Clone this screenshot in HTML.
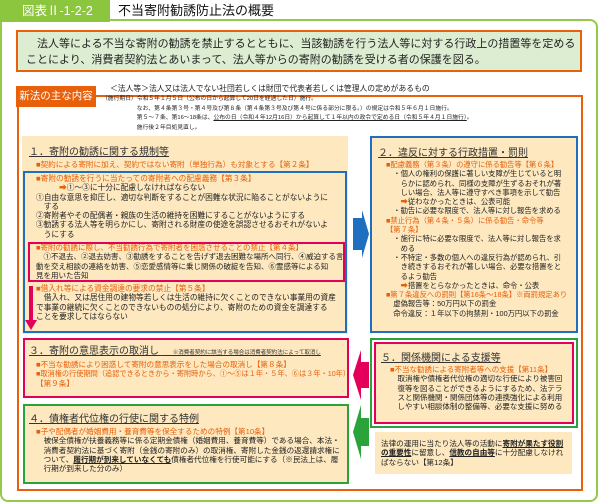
<!DOCTYPE html>
<html><head><meta charset="utf-8"><style>
*{margin:0;padding:0;box-sizing:border-box}
body{width:600px;height:504px;background:#fff;position:relative;overflow:hidden;font-family:"Liberation Sans","Noto Sans CJK JP",sans-serif;color:#222}
.a{position:absolute}
.t{font-size:7.6px;line-height:9.3px;white-space:nowrap}
.o{color:#e8600a}
.h{font-size:10px;line-height:12px;text-decoration:underline;color:#333;white-space:nowrap}
</style></head><body>
<div class="a" style="left:0;top:19px;width:598px;height:483px;border:2px solid #95c94a;border-radius:0 8px 8px 8px"></div>
<div class="a" style="left:0;top:0;width:110px;height:22px;background:#8cc63f;color:#fff;font-size:12.5px;line-height:22px;padding-left:22px">図表Ⅱ-1-2-2</div>
<div class="a" style="left:118px;top:2px;font-size:13px;line-height:18px;color:#111">不当寄附勧誘防止法の概要</div>

<div class="a" style="left:16px;top:30px;width:566px;height:42px;background:#dcedd2;border:2px solid #e8600a;font-size:11px;line-height:16px;padding:4px 0 0 8px;color:#222;white-space:nowrap">　法人等による不当な寄附の勧誘を禁止するとともに、当該勧誘を行う法人等に対する行政上の措置等を定める<br>ことにより、消費者契約法とあいまって、法人等からの寄附の勧誘を受ける者の保護を図る。</div>

<div class="a" style="left:17px;top:95px;width:566px;height:396px;border:2px solid #e8600a"></div>
<div class="a" style="left:16px;top:86px;width:80px;height:21px;background:#e8600a;color:#fff;font-size:10.5px;line-height:21px;text-align:center">新法の主な内容</div>
<div class="a" style="left:110px;top:84px;font-size:7.8px;line-height:10px;white-space:nowrap">＜法人等＞法人又は法人でない社団若しくは財団で代表者若しくは管理人の定めがあるもの</div>
<div class="a" style="left:102px;top:95px;font-size:5.8px;line-height:9.6px;white-space:nowrap">（施行期日）令和５年１月５日（公布の日から起算して20日を経過した日）施行。<br>　　　　　　なお、第４条第３号・第４号及び第８条（第４条第３号及び第４号に係る部分に限る。）の規定は令和５年６月１日施行。<br>　　　　　　第５～７条、第16～18条は、<u>公布の日（令和４年12月16日）から起算して１年以内の政令で定める日（令和５年４月１日施行）</u>。<br>　　　　　　施行後２年目処見直し。</div>

<!-- box1 -->
<div class="a" style="left:22px;top:136px;width:326px;height:198px;background:#fde8c0"></div>
<div class="a h" style="left:29px;top:147px">１．寄附の勧誘に関する規制等</div>
<div class="a t o" style="left:36px;top:160px">■契約による寄附に加え、契約ではない寄附（単独行為）も対象とする【第２条】</div>
<div class="a" style="left:23px;top:171px;width:324px;height:162px;border:2px solid #1f6fc0"></div>
<div class="a t" style="left:36px;top:174px;font-size:7.7px"><span class="o">■寄附の勧誘を行うに当たっての寄附者への配慮義務【第３条】</span><br>　　　<span class="o">➡</span>①～③に十分に配慮しなければならない<br>①自由な意思を抑圧し、適切な判断をすることが困難な状況に陥ることがないように<br>　する<br>②寄附者やその配偶者・親族の生活の維持を困難にすることがないようにする<br>③勧誘する法人等を明らかにし、寄附される財産の使途を誤認させるおそれがないよ<br>　うにする</div>
<div class="a" style="left:28px;top:242px;width:317px;height:40px;border:2px solid #e4005a"></div>
<div class="a t" style="left:36px;top:243px;font-size:7.5px"><span class="o">■寄附の勧誘に際し、不当勧誘行為で寄附者を困惑させることの禁止【第４条】</span><br>　①不退去、②退去妨害、③勧誘をすることを告げず退去困難な場所へ同行、④威迫する言<br>動を交え相談の連絡を妨害、⑤恋愛感情等に乗じ関係の破綻を告知、⑥霊感等による知<br>見を用いた告知</div>
<div class="a t" style="left:36px;top:284px;font-size:7.7px"><span class="o">■借入れ等による資金調達の要求の禁止【第５条】</span><br>　借入れ、又は居住用の建物等若しくは生活の維持に欠くことのできない事業用の資産<br>で事業の継続に欠くことのできないものの処分により、寄附のための資金を調達する<br>ことを要求してはならない</div>
<div class="a" style="left:29px;top:286px;width:4px;height:36px;background:#e4005a"></div>
<div class="a" style="left:25px;top:320px;width:0;height:0;border-left:6px solid transparent;border-right:6px solid transparent;border-top:10px solid #e4005a"></div>

<!-- blue arrow -->
<div class="a" style="left:353px;top:218px;width:9px;height:32px;background:#1f6fc0"></div>
<div class="a" style="left:362px;top:210px;width:0;height:0;border-top:24px solid transparent;border-bottom:24px solid transparent;border-left:7px solid #1f6fc0"></div>

<!-- box2 -->
<div class="a" style="left:370px;top:136px;width:208px;height:197px;background:#fde8c0;border:2px solid #1f6fc0"></div>
<div class="a h" style="left:378px;top:148px">２．違反に対する行政措置・罰則</div>
<div class="a t" style="left:386px;top:160px;font-size:7.3px"><span class="o">■配慮義務（第３条）の遵守に係る勧告等【第６条】</span><br>　・個人の権利の保護に著しい支障が生じていると明<br>　　らかに認められ、同様の支障が生ずるおそれが著<br>　　しい場合、法人等に遵守すべき事項を示して勧告<br>　　<span class="o">➡</span>従わなかったときは、公表可能<br>　・勧告に必要な限度で、法人等に対し報告を求める<br><span class="o">■禁止行為（第４条・５条）に係る勧告・命令等<br>【第７条】</span><br>　・施行に特に必要な限度で、法人等に対し報告を求<br>　　める<br>　・不特定・多数の個人への違反行為が認められ、引<br>　　き続きするおそれが著しい場合、必要な措置をと<br>　　るよう勧告<br>　　<span class="o">➡</span>措置をとらなかったときは、命令・公表<br><span class="o">■第７条違反への罰則【第16条～18条】※両罰規定あり</span><br>　虚偽報告等：50万円以下の罰金<br>　命令違反：１年以下の拘禁刑・100万円以下の罰金</div>

<!-- box3 -->
<div class="a" style="left:23px;top:338px;width:326px;height:60px;background:#fde8c0;border:2px solid #e4005a"></div>
<div class="a h" style="left:29px;top:346px">３．寄附の意思表示の取消し <span style="font-size:5.5px;text-decoration:none">　　※消費者契約に該当する場合は消費者契約法によって取消し</span></div>
<div class="a t o" style="left:36px;top:360px">■不当な勧誘により困惑して寄附の意思表示をした場合の取消し【第８条】<br><span style="font-size:7.2px">■取消権の行使期間（追認できるときから・寄附時から、①～⑤は１年・５年、⑥は３年・10年）</span><br>【第９条】</div>

<!-- box4 -->
<div class="a" style="left:23px;top:404px;width:326px;height:80px;background:#fde8c0;border:2px solid #2aa33a"></div>
<div class="a h" style="left:29px;top:414px">４．債権者代位権の行使に関する特例</div>
<div class="a t" style="left:36px;top:427px"><span class="o">■子や配偶者が婚姻費用・養育費等を保全するための特例【第10条】</span><br>　被保全債権が扶養義務等に係る定期金債権（婚姻費用、養育費等）である場合、本法・<br>　消費者契約法に基づく寄附（金銭の寄附のみ）の取消権、寄附した金銭の返還請求権に<br>　ついて、<b><u>履行期が到来していなくても</u></b>債権者代位権を行使可能にする（※民法上は、履<br>　行期が到来した分のみ）</div>

<!-- arrows left -->
<div class="a" style="left:361px;top:362px;width:8px;height:26px;background:#e4005a"></div>
<div class="a" style="left:353px;top:350px;width:0;height:0;border-top:25px solid transparent;border-bottom:25px solid transparent;border-right:8px solid #e4005a"></div>
<div class="a" style="left:361px;top:418px;width:8px;height:28px;background:#2aa33a"></div>
<div class="a" style="left:353px;top:405px;width:0;height:0;border-top:27px solid transparent;border-bottom:27px solid transparent;border-right:8px solid #2aa33a"></div>

<!-- box5 -->
<div class="a" style="left:370px;top:338px;width:208px;height:90px;border:2px solid #2aa33a;background:#fff"></div>
<div class="a" style="left:374px;top:342px;width:200px;height:82px;border:2px solid #e4005a;background:#fde8c0"></div>
<div class="a h" style="left:381px;top:353px">５．関係機関による支援等</div>
<div class="a t" style="left:390px;top:365px;font-size:7.5px"><span class="o">■不当な勧誘による寄附者等への支援【第11条】</span><br>　取消権や債権者代位権の適切な行使により被害回<br>　復等を図ることができるようにするため、法テラ<br>　スと関係機関・関係団体等の連携強化による利用<br>　しやすい相談体制の整備等、必要な支援に努める</div>
<div class="a t" style="left:375px;top:432px;width:197px;height:42px;background:#fde8c0;padding:7px 0 0 6px;font-size:7.6px">法律の運用に当たり法人等の活動に<b><u>寄附が果たす役割</u></b><br><b><u>の重要性</u></b>に留意し、<b><u>信教の自由等</u></b>に十分配慮しなけれ<br>ばならない【第12条】</div>
</body></html>
